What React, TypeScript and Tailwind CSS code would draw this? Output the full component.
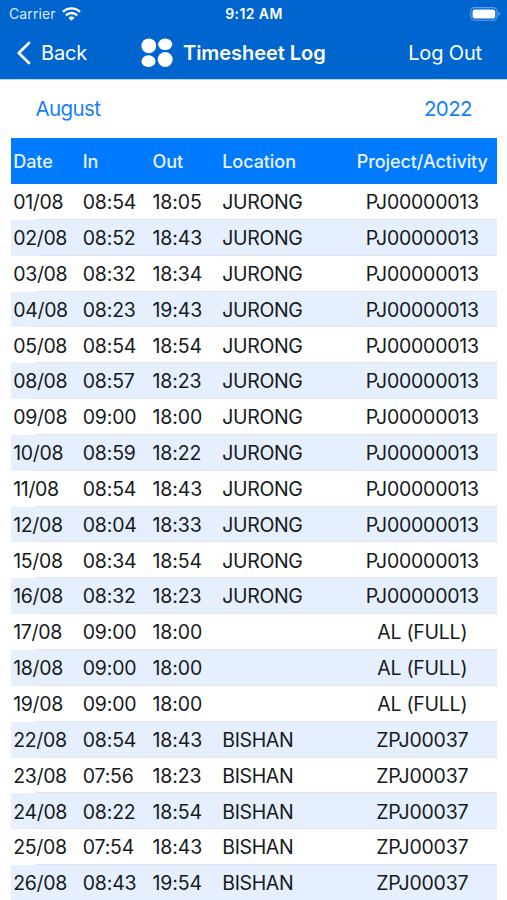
interface TimesheetEntry {
  date: string;
  timeIn: string;
  timeOut: string;
  location: string;
  project: string;
}

const entries: TimesheetEntry[] = [
  { date: '01/08', timeIn: '08:54', timeOut: '18:05', location: 'JURONG', project: 'PJ00000013' },
  { date: '02/08', timeIn: '08:52', timeOut: '18:43', location: 'JURONG', project: 'PJ00000013' },
  { date: '03/08', timeIn: '08:32', timeOut: '18:34', location: 'JURONG', project: 'PJ00000013' },
  { date: '04/08', timeIn: '08:23', timeOut: '19:43', location: 'JURONG', project: 'PJ00000013' },
  { date: '05/08', timeIn: '08:54', timeOut: '18:54', location: 'JURONG', project: 'PJ00000013' },
  { date: '08/08', timeIn: '08:57', timeOut: '18:23', location: 'JURONG', project: 'PJ00000013' },
  { date: '09/08', timeIn: '09:00', timeOut: '18:00', location: 'JURONG', project: 'PJ00000013' },
  { date: '10/08', timeIn: '08:59', timeOut: '18:22', location: 'JURONG', project: 'PJ00000013' },
  { date: '11/08', timeIn: '08:54', timeOut: '18:43', location: 'JURONG', project: 'PJ00000013' },
  { date: '12/08', timeIn: '08:04', timeOut: '18:33', location: 'JURONG', project: 'PJ00000013' },
  { date: '15/08', timeIn: '08:34', timeOut: '18:54', location: 'JURONG', project: 'PJ00000013' },
  { date: '16/08', timeIn: '08:32', timeOut: '18:23', location: 'JURONG', project: 'PJ00000013' },
  { date: '17/08', timeIn: '09:00', timeOut: '18:00', location: '', project: 'AL (FULL)' },
  { date: '18/08', timeIn: '09:00', timeOut: '18:00', location: '', project: 'AL (FULL)' },
  { date: '19/08', timeIn: '09:00', timeOut: '18:00', location: '', project: 'AL (FULL)' },
  { date: '22/08', timeIn: '08:54', timeOut: '18:43', location: 'BISHAN', project: 'ZPJ00037' },
  { date: '23/08', timeIn: '07:56', timeOut: '18:23', location: 'BISHAN', project: 'ZPJ00037' },
  { date: '24/08', timeIn: '08:22', timeOut: '18:54', location: 'BISHAN', project: 'ZPJ00037' },
  { date: '25/08', timeIn: '07:54', timeOut: '18:43', location: 'BISHAN', project: 'ZPJ00037' },
  { date: '26/08', timeIn: '08:43', timeOut: '19:54', location: 'BISHAN', project: 'ZPJ00037' },
];

function WifiIcon() {
  return (
    <svg width="19" height="14" viewBox="0 0 19 14" fill="none" stroke="white" strokeWidth="2.4">
      <path d="M1 4.9a12 12 0 0 1 17 0" />
      <path d="M3.9 8.3a7.9 7.9 0 0 1 11.2 0" />
      <path d="M9.5 13.8 6.4 10.7a4.4 4.4 0 0 1 6.2 0Z" fill="white" stroke="none" />
    </svg>
  );
}

function BatteryIcon() {
  return (
    <svg width="31" height="14" viewBox="0 0 31 14" fill="none">
      <rect x="0.8" y="0.6" width="26.2" height="12.6" rx="3.6" stroke="#5f9fe2" strokeWidth="1.1" />
      <rect x="2.6" y="2.4" width="22.6" height="9" rx="2" fill="white" />
      <path d="M28.4 4.8c2.2.7 2.2 3.5 0 4.2Z" fill="#5f9fe2" />
    </svg>
  );
}

function LogoIcon() {
  return (
    <svg width="32" height="30" viewBox="0 0 32 30" fill="white">
      <ellipse cx="7.8" cy="7.8" rx="7.4" ry="7.4" />
      <ellipse cx="24.2" cy="6.3" rx="7.1" ry="5.8" />
      <ellipse cx="7.5" cy="23.2" rx="7" ry="5.9" />
      <ellipse cx="24.2" cy="21.5" rx="7.5" ry="7.5" />
    </svg>
  );
}

function StatusBar() {
  return (
    <div className="grid h-[27px] grid-cols-3 items-center pl-[9px] pr-[6px] text-[14px] leading-none">
      <div className="flex items-center gap-1.5">
        <span className="tracking-[0.1px] text-[#d9e9fb]">Carrier</span>
        <WifiIcon />
      </div>
      <span className="pr-[2px] text-center font-semibold tracking-[0.4px]">9:12 AM</span>
      <div className="flex justify-end">
        <BatteryIcon />
      </div>
    </div>
  );
}

function NavBar() {
  return (
    <div className="flex h-[51px] items-center text-[20px] leading-none">
      <button className="flex w-[141px] items-center gap-[10px] pl-[16px]">
        <svg width="15" height="24" viewBox="0 0 15 24" fill="none" stroke="white" strokeWidth="2.7" strokeLinecap="round" strokeLinejoin="round">
          <path d="M13 2 2.8 12 13 22" />
        </svg>
        <span className="tracking-[-0.2px]">Back</span>
      </button>
      <div className="flex flex-1 items-center gap-[10px]">
        <LogoIcon />
        <h1 className="whitespace-nowrap font-semibold tracking-[-0.05px]">Timesheet Log</h1>
      </div>
      <button className="pr-[25px] tracking-[-0.15px]">Log Out</button>
    </div>
  );
}

function TimesheetRow({ entry }: { entry: TimesheetEntry }) {
  return (
    <div className="h-[35.85px] odd:bg-white even:bg-[#e6effd]">
      <div className="grid h-full grid-cols-[69.5px_69.75px_69.75px_125px_150px] items-center pl-[2.25px] pt-[2px] text-[19.5px] leading-none tracking-[-0.35px]">
        <span>{entry.date}</span>
        <span className="tracking-[-0.2px]">{entry.timeIn}</span>
        <span className="tracking-[-0.1px]">{entry.timeOut}</span>
        <span>{entry.location}</span>
        <span className="text-center tracking-[-0.25px]">{entry.project}</span>
      </div>
      <div className="-mt-px ml-[25px] h-px bg-[#e1e3ef]" />
    </div>
  );
}

export default function App() {
  return (
    <div className="h-[900px] w-[507px] overflow-hidden bg-white font-['Inter','Liberation_Sans',sans-serif] text-[#151a20]">
      <header className="h-[79px] bg-[#0065ce] text-white">
        <StatusBar />
        <NavBar />
      </header>

      <div className="flex h-[59px] items-center justify-between border-t border-[#b9dbf8] pl-[35.5px] pr-[35px] text-[20.5px] tracking-[-0.6px] text-[#1480f5]">
        <span>August</span>
        <span>2022</span>
      </div>

      <main className="mx-[11px] w-[486px]">
        <div className="grid h-[46px] grid-cols-[69.5px_69.75px_69.75px_125px_150px] items-center bg-[#007aff] pl-[2.25px] pt-[2px] text-[18px] font-medium leading-none tracking-[-0.07px] text-[#e8f3ff]">
          <span>Date</span>
          <span>In</span>
          <span>Out</span>
          <span>Location</span>
          <span className="text-center">Project/Activity</span>
        </div>
        <div>
          {entries.map((entry) => (
            <TimesheetRow key={entry.date} entry={entry} />
          ))}
        </div>
      </main>
    </div>
  );
}
